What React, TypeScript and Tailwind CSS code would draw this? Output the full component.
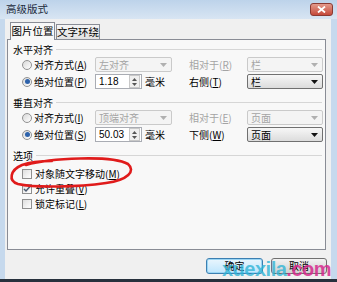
import React from "react";

const cjk = "font-['Noto_Sans_CJK_SC','Noto_Sans',sans-serif]";

function Key({ k }: { k: string }) {
  return (
    <>
      (<span className="underline">{k}</span>)
    </>
  );
}

function Radio({ on }: { on?: boolean }) {
  return (
    <span className="flex h-[10px] w-[10px] shrink-0 items-center justify-center rounded-full border border-[#929292] bg-gradient-to-br from-[#d8d8d8] to-white">
      {on && <span className="h-[5px] w-[5px] rounded-full bg-[#2d62ab]" />}
    </span>
  );
}

function Check({ on }: { on?: boolean }) {
  return (
    <span className="flex h-[10px] w-[10px] shrink-0 items-center justify-center border border-[#8f8f8f] bg-gradient-to-br from-[#dedede] to-white">
      {on && (
        <svg width="8" height="8" viewBox="0 0 8 8">
          <path d="M1 4 L3 6 L7 1.5" stroke="#4a5a70" strokeWidth="1.5" fill="none" />
        </svg>
      )}
    </span>
  );
}

function Arrow({ color }: { color: string }) {
  return (
    <svg width="7" height="4" viewBox="0 0 7 4">
      <path d="M0 0 H7 L3.5 4 Z" fill={color} />
    </svg>
  );
}

function Select({ value, disabled, w }: { value: string; disabled?: boolean; w: string }) {
  return (
    <div
      className={
        w +
        " flex h-[15px] shrink-0 items-center justify-between rounded-[2px] border pl-[3px] pr-[4px] " +
        (disabled
          ? "border-[#cacaca] bg-[#f4f4f4] text-[#a4a4a4]"
          : "border-[#707070] bg-gradient-to-b from-[#f7f7f7] to-[#dcdcdc] text-black")
      }
    >
      <span className="whitespace-nowrap">{value}</span>
      <Arrow color={disabled ? "#b0b0b0" : "#111"} />
    </div>
  );
}

function Spin({ value }: { value: string }) {
  return (
    <div className="flex h-[15px] w-[47px] shrink-0 items-center border border-[#a9acb3] bg-white pl-[3px]">
      <span className="flex-1 font-['Liberation_Sans',sans-serif]">{value}</span>
      <span className="mr-[1px] flex h-[13px] w-[11px] flex-col items-center justify-center gap-[2px] border border-[#c8c8c8] bg-[#efefef]">
        <svg width="5" height="3" viewBox="0 0 5 3">
          <path d="M0 3 H5 L2.5 0 Z" fill="#555" />
        </svg>
        <svg width="5" height="3" viewBox="0 0 5 3">
          <path d="M0 0 H5 L2.5 3 Z" fill="#555" />
        </svg>
      </span>
    </div>
  );
}

function Header({ text }: { text: string }) {
  return (
    <div className="flex h-[13px] items-center pl-[5px] pr-[3px]">
      <span className="whitespace-nowrap">{text}</span>
      <div className="ml-[3px] h-px flex-1 bg-[#d6d6d6]" />
    </div>
  );
}

function Row({ radio, label, left, right, rightDisabled }: {
  radio?: boolean;
  label: React.ReactNode;
  left: React.ReactNode;
  right: React.ReactNode;
  rightDisabled?: boolean;
}) {
  return (
    <div className="flex h-[17px] items-center whitespace-nowrap pl-[14px]">
      <Radio on={radio} />
      <span className="ml-[2px] w-[61px] shrink-0">{label}</span>
      <div className="flex w-[77px] shrink-0 items-center gap-[3px]">{left}</div>
      <span className={"ml-[17px] w-[50px] shrink-0 " + (rightDisabled ? "text-[#a4a4a4]" : "")}>
        {right}
      </span>
    </div>
  );
}

export default function App() {
  return (
    <div className={cjk + " relative h-[282px] w-[337px] overflow-hidden bg-[#c6d9ed] text-[10px] leading-none text-black"}>
      {/* title bar */}
      <div className="flex h-[19px] items-center bg-gradient-to-b from-[#bdd3ea] to-[#d8e5f3] pl-[6px] pr-[4px]">
        <span className="text-[10.5px] text-[#1c2b3c]">高级版式</span>
        <div className="ml-auto flex h-[13px] w-[23px] items-center justify-center rounded-[3px] border border-[#8a3a33] bg-gradient-to-b from-[#e39a8c] to-[#c4483b]">
          <svg width="9" height="7" viewBox="0 0 9 7">
            <path d="M1 0.5 L8 6.5 M8 0.5 L1 6.5" stroke="white" strokeWidth="1.8" />
          </svg>
        </div>
      </div>

      {/* body */}
      <div className="ml-[5px] flex h-[260px] w-[326px] flex-col bg-[#f0f0f0]">
        {/* tabs */}
        <div className="flex h-[20px] items-end whitespace-nowrap pl-[5px] text-[10.5px]">
          <div className="relative z-10 -mb-px flex h-[18px] w-[45px] items-center justify-center border border-b-0 border-[#898c95] bg-[#f8f8f8]">
            图片位置
          </div>
          <div className="ml-px flex h-[15px] w-[44px] items-center justify-center border border-b-0 border-[#898c95] bg-gradient-to-b from-[#f4f4f4] to-[#e2e2e2]">
            文字环绕
          </div>
        </div>

        {/* panel */}
        <div className="ml-[2px] flex h-[211px] w-[319px] flex-col border border-[#898c95] bg-[#f8f8f8] pt-[3px]">
          <Header text="水平对齐" />
          <Row
            label={<>对齐方式<Key k="A" /></>}
            left={<Select value="左对齐" disabled w="w-[77px]" />}
            right={<>相对于<Key k="R" /></>}
            rightDisabled
          />
          <div className="-mt-[17px] flex h-[17px] items-center pl-[239px]">
            <Select value="栏" disabled w="w-[76px]" />
          </div>
          <Row
            radio
            label={<>绝对位置<Key k="P" /></>}
            left={<><Spin value="1.18" /><span>毫米</span></>}
            right={<>右侧<Key k="T" /></>}
          />
          <div className="-mt-[17px] flex h-[17px] items-center pl-[239px]">
            <Select value="栏" w="w-[76px]" />
          </div>

          <div className="mt-[6px]">
            <Header text="垂直对齐" />
          </div>
          <Row
            label={<>对齐方式<Key k="I" /></>}
            left={<Select value="顶端对齐" disabled w="w-[77px]" />}
            right={<>相对于<Key k="E" /></>}
            rightDisabled
          />
          <div className="-mt-[17px] flex h-[17px] items-center pl-[239px]">
            <Select value="页面" disabled w="w-[76px]" />
          </div>
          <Row
            radio
            label={<>绝对位置<Key k="S" /></>}
            left={<><Spin value="50.03" /><span>毫米</span></>}
            right={<>下侧<Key k="W" /></>}
          />
          <div className="-mt-[17px] flex h-[17px] items-center pl-[239px]">
            <Select value="页面" w="w-[76px]" />
          </div>

          <div className="mt-[6px]">
            <Header text="选项" />
          </div>
          <div className="mt-[4px] flex h-[15px] items-center whitespace-nowrap pl-[14px]">
            <Check />
            <span className="ml-[3px]">对象随文字移动<Key k="M" /></span>
          </div>
          <div className="flex h-[15px] items-center whitespace-nowrap pl-[14px]">
            <Check on />
            <span className="ml-[3px]">允许重叠<Key k="V" /></span>
          </div>
          <div className="flex h-[15px] items-center whitespace-nowrap pl-[14px]">
            <Check />
            <span className="ml-[3px]">锁定标记<Key k="L" /></span>
          </div>
        </div>

        {/* buttons */}
        <div className="mt-[8px] flex justify-end gap-[8px] pr-[4px]">
          <div className="flex h-[16px] w-[57px] items-center justify-center rounded-[3px] border border-[#3c7fb1] bg-gradient-to-b from-[#eaf6fd] to-[#bee6fd] shadow-[inset_0_0_0_1px_#9ad5f4]">
            确定
          </div>
          <div className="flex h-[16px] w-[56px] items-center justify-center rounded-[3px] border border-[#707070] bg-gradient-to-b from-[#f2f2f2] to-[#d0d0d0]">
            取消
          </div>
        </div>
      </div>

      {/* bottom dark edge */}
      <div className="h-[3px] w-full bg-[#27313d]" />

      {/* red hand-drawn loop */}
      <svg className="pointer-events-none absolute left-0 top-0" width="337" height="282" viewBox="0 0 337 282">
        <path
          d="M26 165 C50 158, 112 155, 128 164 C136 171, 128 180, 106 183 C78 187, 35 188, 18 184 C8 181, 10 170, 22 165 C30 162, 40 161, 52 161"
          stroke="#e01b1b"
          strokeWidth="2.6"
          fill="none"
          strokeLinecap="round"
        />
      </svg>

      {/* watermark */}
      <div className="pointer-events-none absolute left-[222px] top-[259px] font-['Liberation_Sans',sans-serif] text-[20px] font-bold leading-none tracking-[-0.5px]">
        <span className="text-[#2fb4d6]/80">xuexila</span>
        <span className="text-[#d6288d]/85">.com</span>
      </div>
    </div>
  );
}
